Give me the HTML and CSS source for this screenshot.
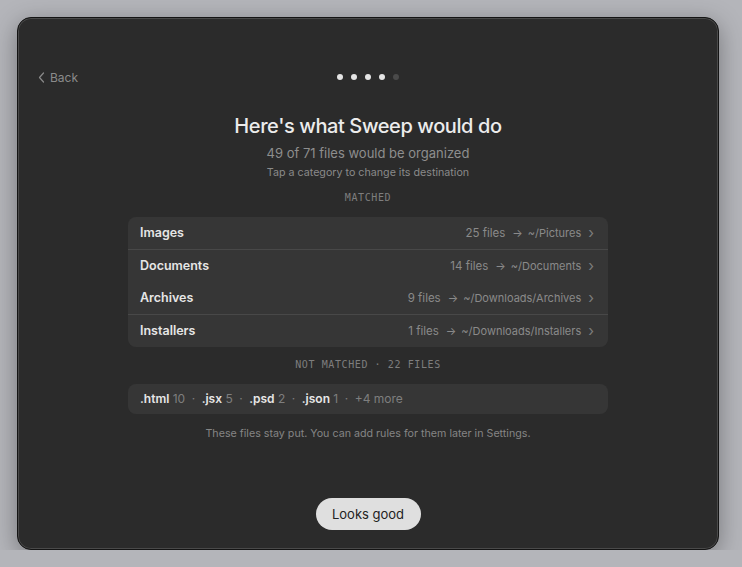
FILE: index.html
```html
<!DOCTYPE html>
<html lang="en">
<head>
    <meta charset="UTF-8">
    <meta name="viewport" content="width=device-width, initial-scale=1.0">
    <title>Sweep</title>
    <link rel="stylesheet" href="styles.css">
</head>
<body>
    <div class="window">
        <!-- top bar: back + step dots -->
        <div class="topbar">
            <a class="back" href="#">
                <svg width="7" height="11" viewBox="0 0 7 11"><path d="M5.5 1 L1.5 5.5 L5.5 10" fill="none" stroke="currentColor" stroke-width="1.2" stroke-linecap="round" stroke-linejoin="round"/></svg>
                Back
            </a>
            <div class="dots">
                <span class="dot on"></span>
                <span class="dot on"></span>
                <span class="dot on"></span>
                <span class="dot on"></span>
                <span class="dot"></span>
            </div>
            <div></div>
        </div>

        <div class="content">
            <h1>Here's what Sweep would do</h1>
            <p class="sub">49 of 71 files would be organized</p>
            <p class="hint">Tap a category to change its destination</p>

            <div class="label">MATCHED</div>
            <ul class="card">
                <li class="row line">
                    <span class="name">Images</span>
                    <span class="dest"><span class="count">25 files</span><span class="arrow">→</span>~/Pictures<span class="chev">›</span></span>
                </li>
                <li class="row">
                    <span class="name">Documents</span>
                    <span class="dest"><span class="count">14 files</span><span class="arrow">→</span>~/Documents<span class="chev">›</span></span>
                </li>
                <li class="row line">
                    <span class="name">Archives</span>
                    <span class="dest"><span class="count">9 files</span><span class="arrow">→</span>~/Downloads/Archives<span class="chev">›</span></span>
                </li>
                <li class="row">
                    <span class="name">Installers</span>
                    <span class="dest"><span class="count">1 files</span><span class="arrow">→</span>~/Downloads/Installers<span class="chev">›</span></span>
                </li>
            </ul>

            <div class="label">NOT MATCHED · 22 FILES</div>
            <div class="card exts">
                <b>.html</b> 10<span class="sep">·</span><b>.jsx</b> 5<span class="sep">·</span><b>.psd</b> 2<span class="sep">·</span><b>.json</b> 1<span class="sep">·</span>+4 more
            </div>
            <p class="note">These files stay put. You can add rules for them later in Settings.</p>
        </div>

        <div class="footer">
            <button class="primary">Looks good</button>
        </div>
    </div>
</body>
</html>
```

FILE: styles.css
```css
body {
    margin: 0;
    background: #b4b5ba;
    font-family: Inter, "Noto Sans", sans-serif;
    padding: 17px 0 0 17px;
}
.window {
    width: 700px;
    height: 531px;
    background: #2b2b2b;
    border: 1px solid #141414;
    border-radius: 14px;
    box-shadow: inset 0 0 0 1px #4a4a4a, 0 6px 24px rgba(0,0,0,0.35);
    display: flex;
    flex-direction: column;
    box-sizing: content-box;
}
.topbar {
    display: grid;
    grid-template-columns: 1fr auto 1fr;
    align-items: center;
    height: 16px;
    margin-top: 51px;
    padding: 0 20px;
}
.back {
    display: flex;
    align-items: center;
    gap: 5px;
    color: #8a8a8a;
    text-decoration: none;
    font-size: 12px;
}
.dots {
    display: flex;
    gap: 8px;
}
.dot {
    width: 6px;
    height: 6px;
    border-radius: 50%;
    background: #4a4a4a;
}
.dot.on {
    background: #e4e4e4;
}
.content {
    width: 480px;
    margin: 0 auto;
    text-align: center;
}
h1 {
    margin: 27px 0 0;
    font-size: 20px;
    line-height: 28px;
    font-weight: 500;
    color: #ececec;
    letter-spacing: -0.4px;
}
.sub {
    margin: 4px 0 0;
    font-size: 13px;
    line-height: 18px;
    color: #8e8e8e;
}
.hint {
    margin: 4px 0 0;
    font-size: 10.7px;
    line-height: 14px;
    color: #8a8a8a;
}
.label {
    margin-top: 12px;
    font-family: "DejaVu Sans Mono", "Liberation Mono", monospace;
    font-size: 10px;
    line-height: 12px;
    letter-spacing: 0.6px;
    color: #7e7e7e;
}
.card {
    list-style: none;
    margin: 13px 0 0;
    padding: 0;
    background: #363636;
    border-radius: 8px;
    text-align: left;
}
.row {
    display: flex;
    justify-content: space-between;
    align-items: center;
    height: 32.5px;
    padding: 0 14px 0 12px;
    box-sizing: border-box;
}
.row.line {
    border-bottom: 1px solid #484848;
}
.name {
    font-size: 12.5px;
    font-weight: 600;
    color: #e6e6e6;
}
.dest {
    display: flex;
    align-items: center;
    font-size: 11px;
    color: #8a8a8a;
}
.count {
    font-size: 11.5px;
}
.arrow {
    margin: 0 5px 0 7px;
}
.chev {
    margin-left: 7px;
    font-size: 15px;
    line-height: 1;
    color: #7c7c7c;
}
.card + .label {
    margin-top: 12px;
}
.exts {
    margin-top: 13px;
    height: 30px;
    line-height: 30px;
    padding: 0 12px;
    font-size: 12px;
    color: #7e7e7e;
}
.exts b {
    font-weight: 600;
    color: #e6e6e6;
}
.sep {
    margin: 0 6.5px;
}
.note {
    margin: 13px 0 0;
    font-size: 10.7px;
    line-height: 14px;
    color: #858585;
}
.footer {
    margin-top: auto;
    margin-bottom: 19px;
    display: flex;
    justify-content: center;
}
.primary {
    width: 105px;
    height: 32px;
    border: none;
    border-radius: 16px;
    background: #dfdfdf;
    color: #222;
    font-family: Inter, "Noto Sans", sans-serif;
    font-size: 13px;
}
```
